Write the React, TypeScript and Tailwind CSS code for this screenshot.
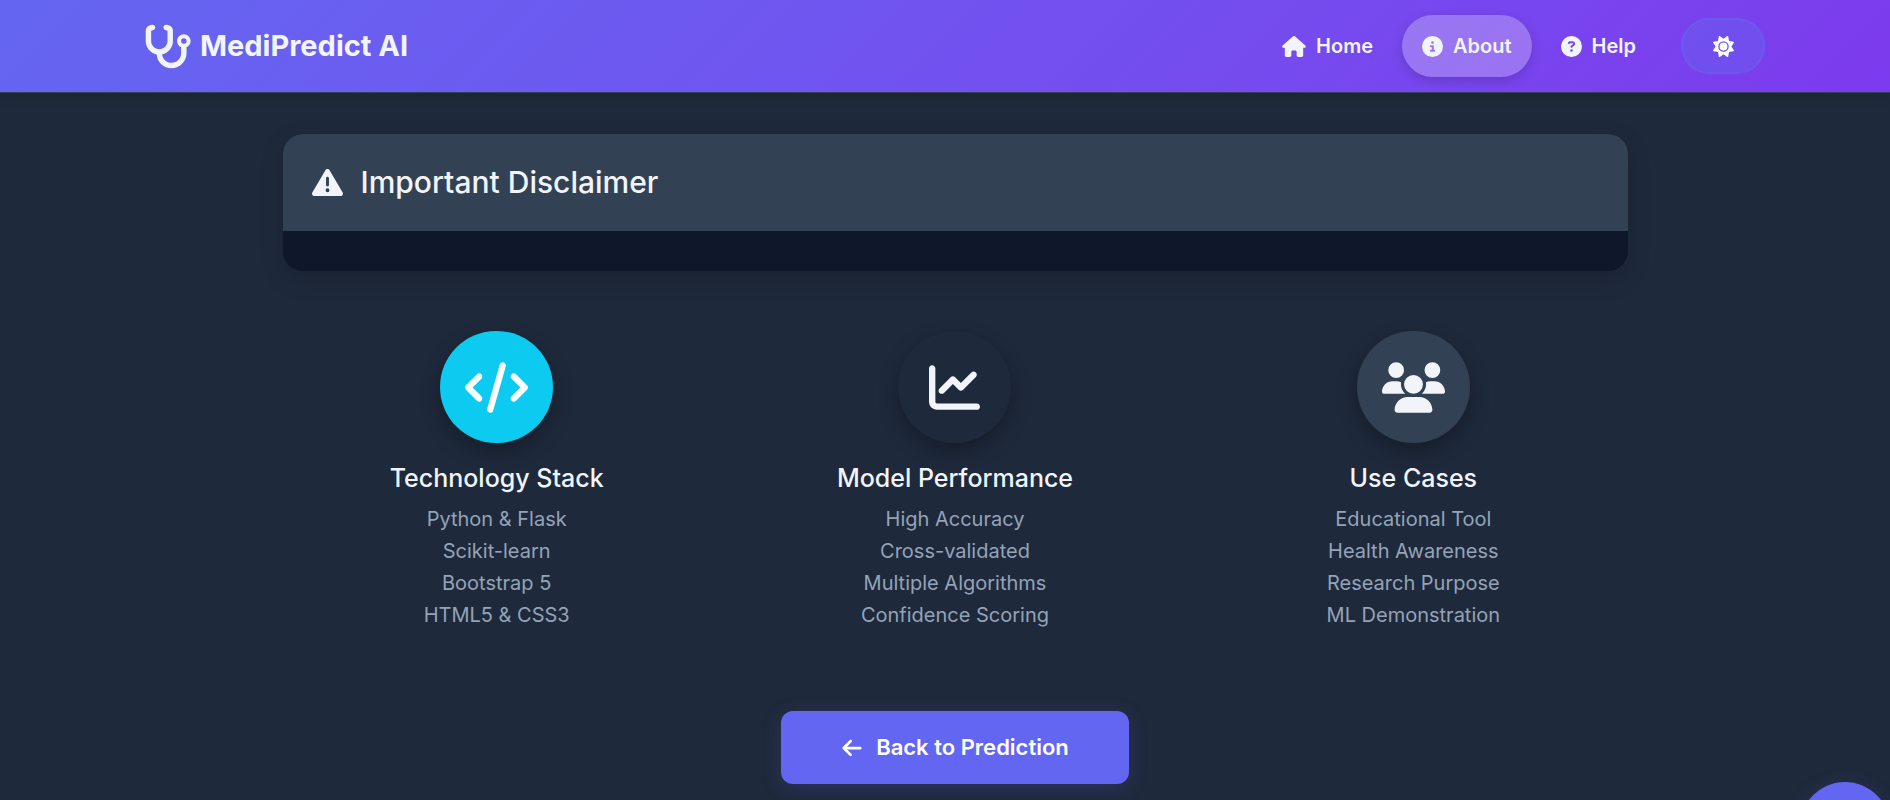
import React from "react";
import {
  FaStethoscope, FaHouse, FaCircleInfo, FaCircleQuestion, FaSun,
  FaTriangleExclamation, FaCode, FaChartLine, FaUsers, FaArrowLeft,
} from "react-icons/fa6";

const navItems = [
  { label: "Home", Icon: FaHouse, iconSize: "w-6", active: false },
  { label: "About", Icon: FaCircleInfo, iconSize: "w-[21px]", active: true },
  { label: "Help", Icon: FaCircleQuestion, iconSize: "w-[21px]", active: false },
];

const features = [
  {
    title: "Technology Stack",
    Icon: FaCode,
    iconSize: "w-[63px]",
    tone: "bg-[#0dcaf0] text-white",
    items: ["Python & Flask", "Scikit-learn", "Bootstrap 5", "HTML5 & CSS3"],
  },
  {
    title: "Model Performance",
    Icon: FaChartLine,
    iconSize: "w-[51px]",
    tone: "bg-[#1e293b] text-[#f1f5f9]",
    items: ["High Accuracy", "Cross-validated", "Multiple Algorithms", "Confidence Scoring"],
  },
  {
    title: "Use Cases",
    Icon: FaUsers,
    iconSize: "w-[63px]",
    tone: "bg-[#334155] text-[#f1f5f9]",
    items: ["Educational Tool", "Health Awareness", "Research Purpose", "ML Demonstration"],
  },
];

function Navbar() {
  return (
    <header className="relative z-10 border-b border-[#334155] bg-linear-135 from-[#6366f1] to-[#7c3aed] pl-[18px] shadow-[0_4px_10px_rgba(0,0,0,0.1)]">
      <div className="mx-auto flex h-[92px] max-w-[1622px] items-center justify-between">
        <a href="#" className="flex items-center gap-2 text-[29px] font-bold text-[#f1f5f9]">
          <FaStethoscope className="h-[45px] w-[49px]" />
          MediPredict AI
        </a>
        <nav className="flex items-center gap-[9px]">
          {navItems.map(({ label, Icon, iconSize, active }) => (
            <a
              key={label}
              href="#"
              className={`flex h-[62px] items-center gap-[10px] rounded-full px-5 text-xl font-semibold text-[#f1f5f9] ${
                active ? "bg-white/25 shadow-[0_4px_12px_rgba(0,0,0,0.15)]" : ""
              }`}
            >
              <Icon className={`h-[21px] ${iconSize}`} />
              {label}
            </a>
          ))}
          <button
            type="button"
            aria-label="Toggle theme"
            className="ml-4 flex h-14 w-[84px] items-center justify-center rounded-full border-2 border-[#6366f1]/50 bg-[#6366f1]/40 text-white"
          >
            <FaSun className="size-[21px]" />
          </button>
        </nav>
      </div>
    </header>
  );
}

export default function App() {
  return (
    <div className="relative h-screen overflow-hidden bg-[#1e293b] font-['Inter',sans-serif] text-[#f1f5f9]">
      <Navbar />
      <main className="pl-5">
        <div className="mx-auto max-w-[1345px] pt-[41px]">
          <section className="overflow-hidden rounded-[20px] bg-[#0f172a] pb-10 shadow-[0_8px_25px_rgba(0,0,0,0.15)]">
            <h1 className="flex h-[97px] items-center gap-[18px] bg-[#334155] px-[29px] text-[30px] font-medium">
              <FaTriangleExclamation className="size-[31px]" />
              Important Disclaimer
            </h1>
          </section>
        </div>
        <div className="mx-auto mt-[60px] grid max-w-[1375px] grid-cols-3">
          {features.map(({ title, Icon, iconSize, tone, items }) => (
            <section key={title} className="flex flex-col items-center text-center">
              <div className={`flex h-28 w-[113px] items-center justify-center rounded-full shadow-[0_8px_20px_rgba(0,0,0,0.3)] ${tone}`}>
                <Icon className={`h-[51px] ${iconSize}`} />
              </div>
              <h2 className="mt-5 text-[25px] leading-[30px] font-medium">{title}</h2>
              <ul className="mt-[10px] text-xl leading-8 text-[#94a3b8]">
                {items.map((item) => (
                  <li key={item}>{item}</li>
                ))}
              </ul>
            </section>
          ))}
        </div>
        <div className="mt-20 flex justify-center">
          <a
            href="#"
            className="flex h-[73px] items-center gap-[13px] rounded-xl bg-[#6366f1] px-[60px] text-[22px] font-semibold text-white shadow-[0_4px_20px_rgba(99,102,241,0.2)]"
          >
            <FaArrowLeft className="size-[22px]" />
            Back to Prediction
          </a>
        </div>
      </main>
      <button
        type="button"
        aria-label="Open chat"
        className="absolute right-0 -bottom-[72px] size-[90px] rounded-full bg-[#6366f1] shadow-[0_4px_20px_rgba(99,102,241,0.2)]"
      />
    </div>
  );
}
